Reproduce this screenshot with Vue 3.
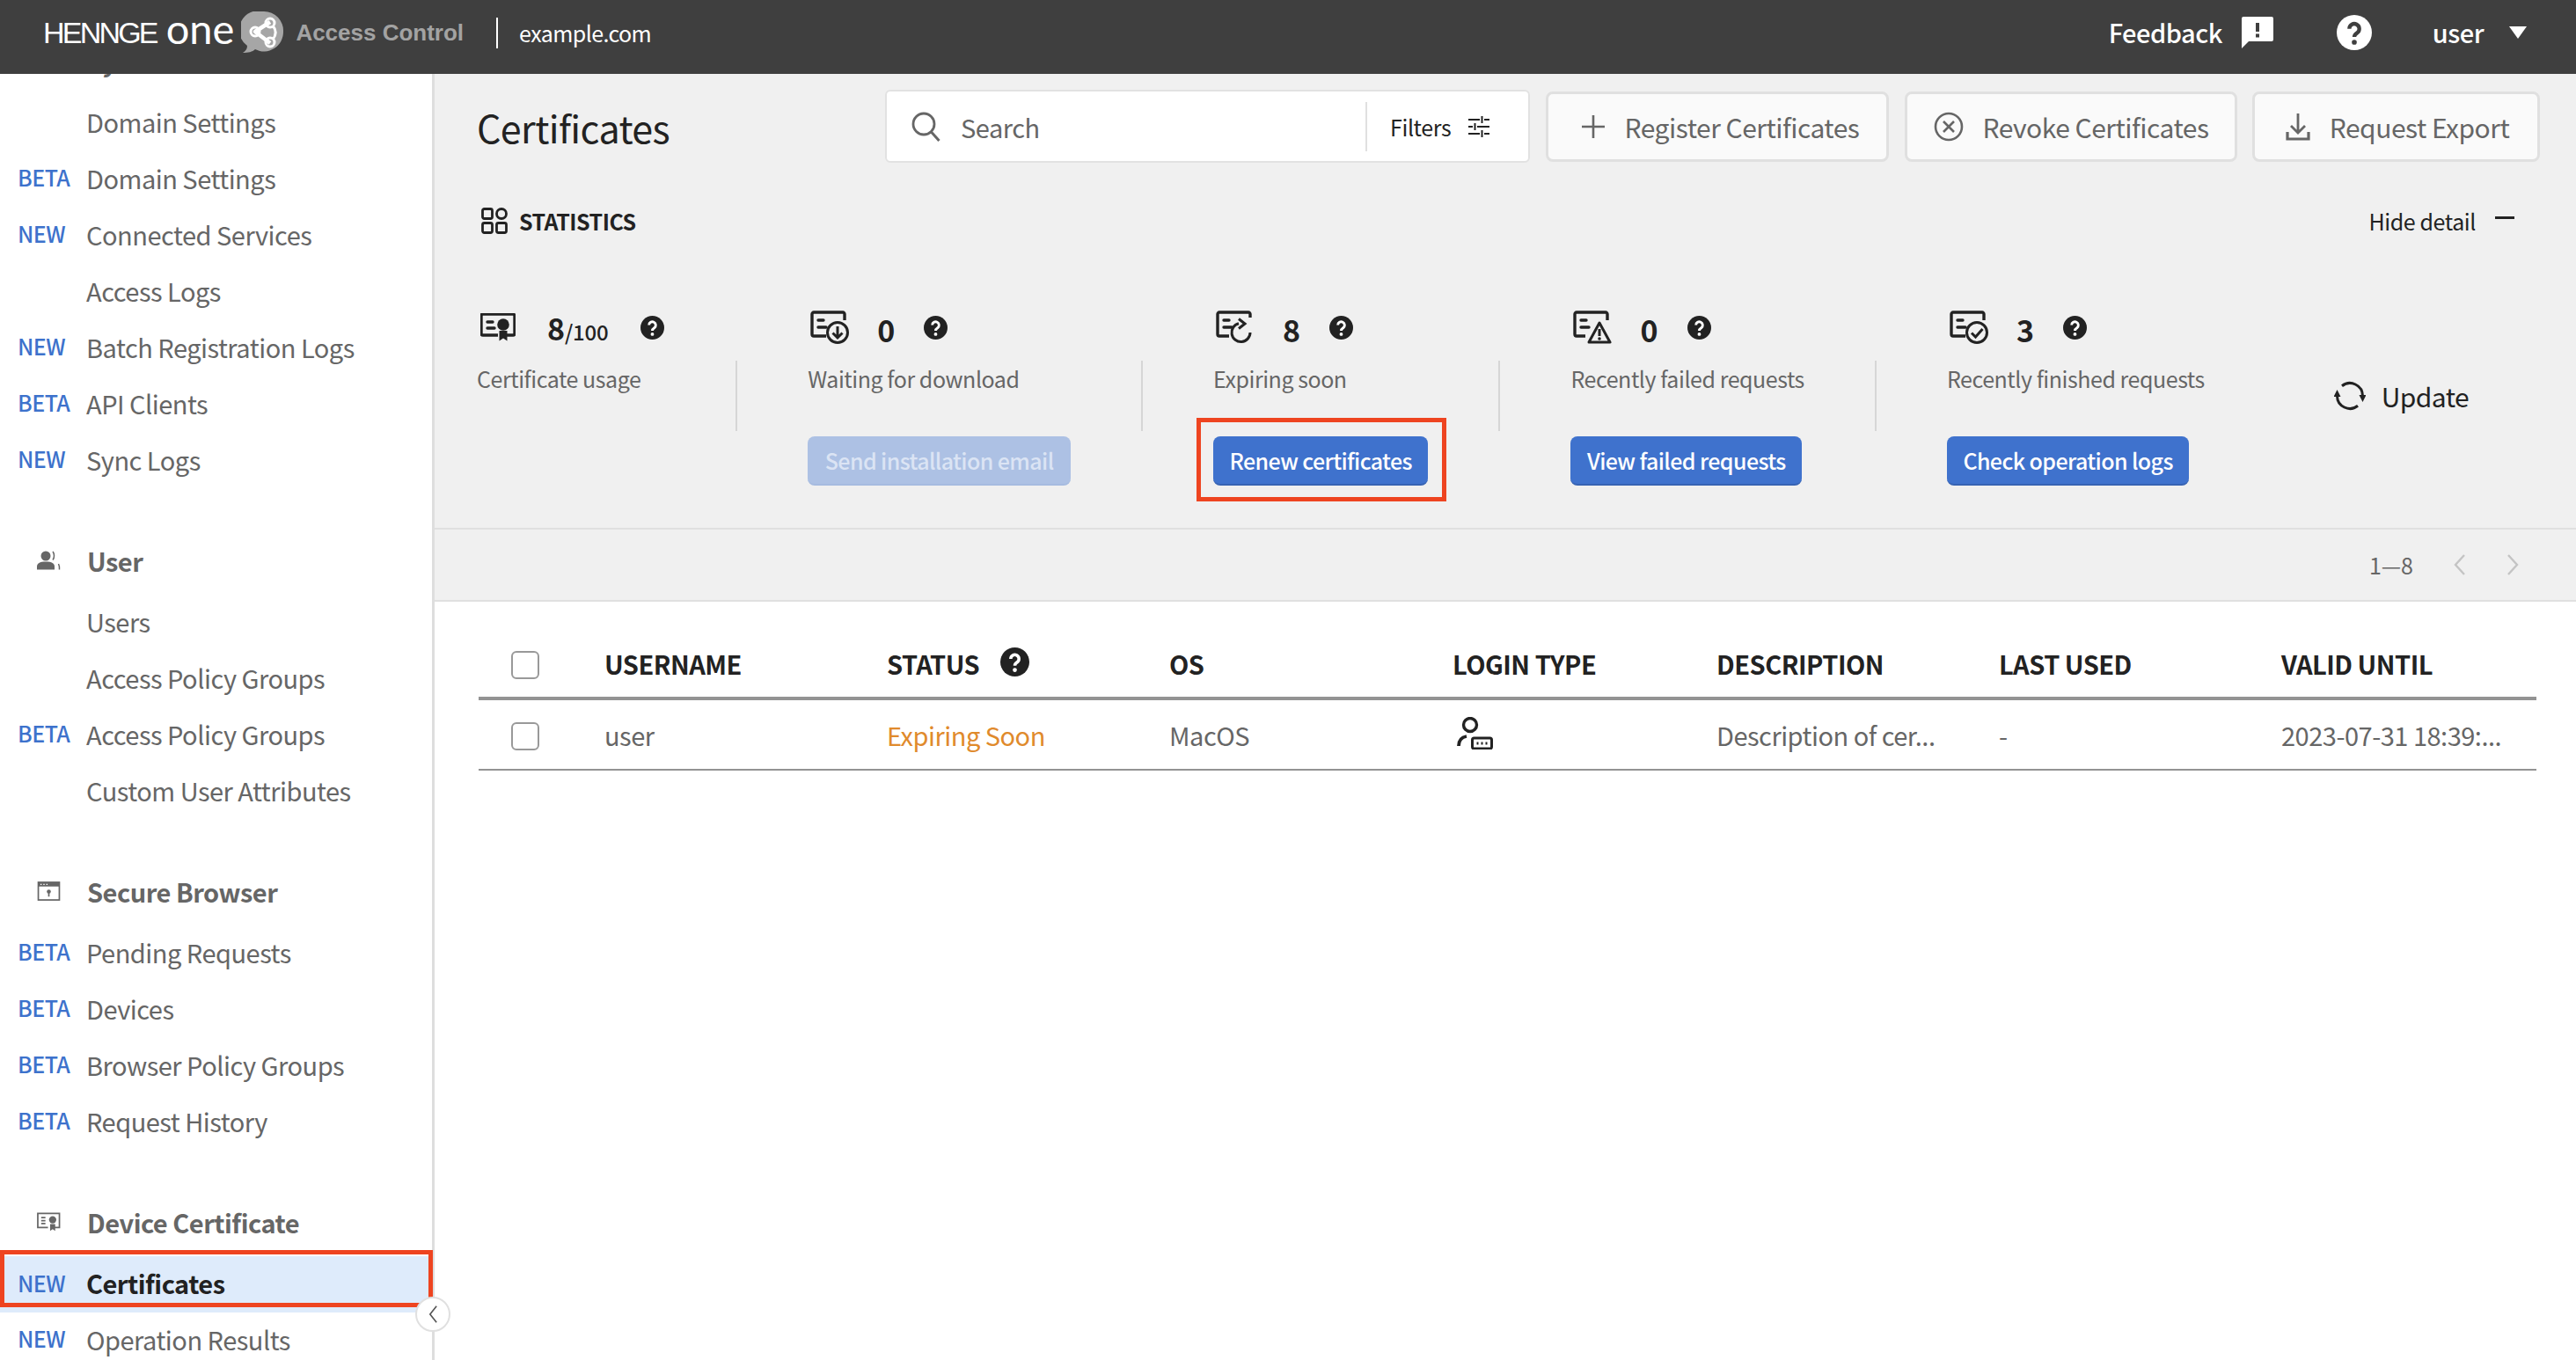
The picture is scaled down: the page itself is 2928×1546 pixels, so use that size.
<template>
  <div class="page">
    <svg class="sprite" aria-hidden="true">
      <symbol id="i-help" viewBox="0 0 24 24">
        <circle cx="12" cy="12" r="12" fill="currentColor" />
        <path d="M8.600 9.400a3.400 3.400 0 1 1 5.400 2.800c-1.200.8-2 1.300-2 2.800" fill="none" style="stroke: var(--q, #fff)" stroke-width="2.600" />
        <circle cx="12" cy="18.600" r="1.700" style="fill: var(--q, #fff)" />
      </symbol>
      <symbol id="i-cert" viewBox="0 0 40 32">
        <path d="M30 25h7a2 2 0 0 0 2-2V3a2 2 0 0 0-2-2H3a2 2 0 0 0-2 2v20a2 2 0 0 0 2 2h17" fill="none" stroke="currentColor" stroke-width="3.400" />
        <path d="M8 10h6M8 17h8" stroke="currentColor" stroke-width="3.400" stroke-linecap="round" />
        <circle cx="26" cy="13" r="6.800" fill="currentColor" />
        <path d="M21.500 20h9v11.500l-4.500-3-4.500 3z" fill="currentColor" />
      </symbol>
      <symbol id="i-wait" viewBox="0 0 44 38">
        <path d="M39 11V4a2 2 0 0 0-2-2H4a2 2 0 0 0-2 2v23a2 2 0 0 0 2 2h14" fill="none" stroke="currentColor" stroke-width="3.400" />
        <path d="M9 11h6M9 19h9" stroke="currentColor" stroke-width="3.400" stroke-linecap="round" />
        <circle cx="31" cy="25" r="11.500" fill="none" stroke="currentColor" stroke-width="3" />
        <path d="M31 18v13M25.500 25.500l5.500 5.500 5.500-5.500" fill="none" stroke="currentColor" stroke-width="3" />
      </symbol>
      <symbol id="i-renew" viewBox="0 0 44 38">
        <path d="M39 8V4a2 2 0 0 0-2-2H4a2 2 0 0 0-2 2v23a2 2 0 0 0 2 2h11" fill="none" stroke="currentColor" stroke-width="3.400" />
        <path d="M9 11h6M9 19h9" stroke="currentColor" stroke-width="3.400" stroke-linecap="round" />
        <path d="M39 25a10.500 10.500 0 1 1-13-10.200" fill="none" stroke="currentColor" stroke-width="3" />
        <path d="M26 9.500l7 5.500-7 5.500" fill="none" stroke="currentColor" stroke-width="3" />
      </symbol>
      <symbol id="i-warn" viewBox="0 0 44 38">
        <path d="M39 11V4a2 2 0 0 0-2-2H4a2 2 0 0 0-2 2v23a2 2 0 0 0 2 2h10" fill="none" stroke="currentColor" stroke-width="3.400" />
        <path d="M9 11h6M9 19h9" stroke="currentColor" stroke-width="3.400" stroke-linecap="round" />
        <path d="M30 14l12 22H18z" fill="none" stroke="currentColor" stroke-width="3" stroke-linejoin="round" />
        <path d="M30 21v8" stroke="currentColor" stroke-width="3" />
        <circle cx="30" cy="32" r="1.800" fill="currentColor" />
      </symbol>
      <symbol id="i-done" viewBox="0 0 44 38">
        <path d="M39 11V4a2 2 0 0 0-2-2H4a2 2 0 0 0-2 2v23a2 2 0 0 0 2 2h14" fill="none" stroke="currentColor" stroke-width="3.400" />
        <path d="M9 11h6M9 19h9" stroke="currentColor" stroke-width="3.400" stroke-linecap="round" />
        <circle cx="31" cy="25" r="11.500" fill="none" stroke="currentColor" stroke-width="3" />
        <path d="M25 25.500l4.500 4.500 8-9" fill="none" stroke="currentColor" stroke-width="3" />
      </symbol>
      <symbol id="i-user" viewBox="0 0 27 22">
        <circle cx="10" cy="6" r="5.500" fill="currentColor" />
        <path d="M0 21.500V18c0-3.500 3-5.500 10-5.500s10 2 10 5.500v3.500z" fill="currentColor" />
        <path d="M18 1c2 2.500 2 7 0 9.500M24.500 15c1 2 1.200 4 1 6.500" fill="none" stroke="currentColor" stroke-width="1.500" />
      </symbol>
      <symbol id="i-browser" viewBox="0 0 27 23">
        <rect x="1" y="1" width="25" height="21" fill="none" stroke="currentColor" stroke-width="1.800" />
        <path d="M1 1h25v5H1z" fill="currentColor" />
        <path d="M3.500 3.500h1.500M7 3.500h1.500M10.500 3.500h1.500" stroke="#fff" stroke-width="1.500" />
        <circle cx="13.500" cy="12" r="2.400" fill="currentColor" />
        <path d="M13.500 13v5" stroke="currentColor" stroke-width="1.800" />
      </symbol>
      <symbol id="i-device" viewBox="0 0 28 22">
        <path d="M20 17.500h6.500V1H1v16.500h12" fill="none" stroke="currentColor" stroke-width="1.800" />
        <path d="M5 6h5M5 9.500h5M5 13h5" stroke="currentColor" stroke-width="1.800" />
        <circle cx="18.500" cy="8.500" r="4.300" fill="currentColor" />
        <path d="M15.500 13.500h6v8l-3-2-3 2z" fill="currentColor" />
      </symbol>
      <symbol id="i-login" viewBox="0 0 41 37">
        <circle cx="15" cy="9" r="7.500" fill="none" stroke="currentColor" stroke-width="3.400" />
        <path d="M2 33c0-6 3-10 9-11" fill="none" stroke="currentColor" stroke-width="3.800" />
        <rect x="17.500" y="24" width="22" height="12" rx="2" fill="none" stroke="currentColor" stroke-width="3" />
        <path d="M22.500 30h2M27.500 30h2M32.500 30h2" stroke="currentColor" stroke-width="2.800" />
      </symbol>
    </svg>

    <header class="topbar">
      <div class="brand">
        <span class="brand-name">HENNGE</span>
        <span class="brand-one">one</span>
        <svg class="brand-mark" viewBox="0 0 48 48">
          <path d="M26 0a22 22 0 0 1 22 23 22 22 0 0 1-32 20c-3 3-8 4-14 4 3-2 5-4 5-8A22 22 0 0 1 26 0z" fill="#a6a6a6" />
          <path d="M33 12L16 23l17 13" fill="none" stroke="#fff" stroke-width="4.500" stroke-linejoin="round" />
          <circle cx="16" cy="23" r="5" fill="none" stroke="#fff" stroke-width="3" />
          <circle cx="33" cy="13" r="5" fill="none" stroke="#fff" stroke-width="3" />
          <circle cx="33" cy="35" r="5" fill="none" stroke="#fff" stroke-width="3" />
          <path d="M36 16c4 5 4 11 0 16" fill="none" stroke="#fff" stroke-width="3" />
        </svg>
        <span class="brand-product">Access Control</span>
        <span class="brand-domain">example.com</span>
      </div>
      <div class="topbar-right">
        <span class="top-link">Feedback</span>
        <svg class="feedback-icon" viewBox="0 0 36 36">
          <path d="M2 0h32a2 2 0 0 1 2 2v24a2 2 0 0 1-2 2H8l-8 8V2a2 2 0 0 1 2-2z" fill="#fff" />
          <path d="M18 7v10" stroke="#3f3f3f" stroke-width="4" />
          <rect x="16" y="19.500" width="4" height="4" fill="#3f3f3f" />
        </svg>
        <svg class="top-help"><use href="#i-help" /></svg>
        <span class="top-link top-user">user</span>
        <span class="caret"></span>
      </div>
    </header>

    <div class="body">
      <aside class="sidebar">
        <nav class="sidebar-inner">
          <section v-for="group in nav" :key="group.title" class="nav-group">
            <div class="nav-head">
              <svg v-if="group.icon" class="nav-icon" :class="group.icon"><use :href="`#i-${group.icon}`" /></svg>
              <span class="nav-icon" v-else></span>
              <span>{{ group.title }}</span>
            </div>
            <div
              v-for="item in group.items"
              :key="item.label + item.tag"
              class="nav-item"
              :class="{ active: item.active }"
            >
              <span class="nav-tag">{{ item.tag }}</span>
              <span>{{ item.label }}</span>
            </div>
          </section>
        </nav>
        <div class="active-mark"></div>
        <button class="collapse">
          <svg viewBox="0 0 12 24"><path d="M10 2L2 12l8 10" fill="none" stroke="#555" stroke-width="1.800" /></svg>
        </button>
      </aside>

      <main class="main">
        <div class="panel">
          <div class="toolbar">
            <h1 class="title">Certificates</h1>
            <div class="search">
              <svg class="search-icon" viewBox="0 0 34 34">
                <circle cx="14" cy="14" r="12" fill="none" stroke="currentColor" stroke-width="2.800" />
                <path d="M22.500 23l9 10" stroke="currentColor" stroke-width="3" />
              </svg>
              <span class="search-text">Search</span>
              <div class="filters">
                <span>Filters</span>
                <svg class="filter-icon" viewBox="0 0 24 24">
                  <path d="M0 4h13M18 4h6M0 12h5M10 12h14M0 20h13M18 20h6M15.500 0v8M7.500 8v8M15.500 16v8" fill="none" stroke="#222" stroke-width="2" />
                </svg>
              </div>
            </div>
            <button class="tool-btn register">
              <svg class="tool-icon" viewBox="0 0 28 28"><path d="M14 1v26M1 14h26" stroke="currentColor" stroke-width="2.600" /></svg>
              Register Certificates
            </button>
            <button class="tool-btn revoke">
              <svg class="tool-icon" viewBox="0 0 34 34">
                <circle cx="17" cy="17" r="15" fill="none" stroke="currentColor" stroke-width="2.600" />
                <path d="M11 11l12 12M23 11L11 23" stroke="currentColor" stroke-width="2.600" />
              </svg>
              Revoke Certificates
            </button>
            <button class="tool-btn export">
              <svg class="tool-icon" viewBox="0 0 28 32">
                <path d="M14 1v21M6 15l8 8 8-8" fill="none" stroke="currentColor" stroke-width="2.800" />
                <path d="M2 22v8h24v-8" fill="none" stroke="currentColor" stroke-width="3.200" />
              </svg>
              Request Export
            </button>
          </div>

          <div class="stats-head">
            <svg class="stats-icon" viewBox="0 0 30 30">
              <g fill="none" stroke="#222" stroke-width="2.800">
                <rect x="1.500" y="1.500" width="11" height="11" rx="2" />
                <circle cx="23" cy="7" r="5.500" />
                <rect x="1.500" y="17.500" width="11" height="11" rx="2" />
                <rect x="17.500" y="17.500" width="11" height="11" rx="2" />
              </g>
            </svg>
            <span class="stats-title">STATISTICS</span>
            <span class="hide-detail">Hide detail</span>
            <span class="minus"></span>
          </div>

          <div class="stats">
            <template v-for="(stat, i) in stats" :key="stat.label">
              <span v-if="i > 0" class="stat-sep"></span>
              <div class="stat">
                <div class="stat-top">
                  <svg class="stat-icon" :class="{ 'is-cert': stat.icon === 'cert' }"><use :href="`#i-${stat.icon}`" /></svg>
                  <span class="stat-value">{{ stat.value }}<small v-if="stat.total">/{{ stat.total }}</small></span>
                  <svg class="stat-help"><use href="#i-help" /></svg>
                </div>
                <div class="stat-label">{{ stat.label }}</div>
                <button v-if="stat.action" class="stat-btn" :class="{ disabled: stat.disabled }">{{ stat.action }}</button>
                <div v-if="stat.marked" class="btn-mark"></div>
              </div>
            </template>
            <div class="update">
              <svg class="update-icon" viewBox="0 0 36 36">
                <path d="M9 6.700A14.500 14.500 0 0 1 32.500 18M27 29.300A14.500 14.500 0 0 1 3.500 18" fill="none" stroke="#222" stroke-width="3" />
                <path d="M28.500 17h8l-4 8zM-.5 19h8l-4-8z" fill="#222" />
              </svg>
              <span>Update</span>
            </div>
          </div>
        </div>

        <div class="pager">
          <span>1—8</span>
          <svg class="pager-arrow" viewBox="0 0 14 26"><path d="M12 2L2 13l10 11" fill="none" stroke="#c4c4c4" stroke-width="2.400" /></svg>
          <svg class="pager-arrow" viewBox="0 0 14 26"><path d="M2 2l10 11L2 24" fill="none" stroke="#c4c4c4" stroke-width="2.400" /></svg>
        </div>

        <div class="table">
          <div class="row row-head">
            <span class="check"></span>
            <span v-for="col in columns" :key="col" class="head-cell">
              {{ col }}
              <svg v-if="col === 'STATUS'" class="status-help"><use href="#i-help" /></svg>
            </span>
          </div>
          <div class="row row-body">
            <span class="check"></span>
            <span>user</span>
            <span class="expiring">Expiring Soon</span>
            <span>MacOS</span>
            <span><svg class="login-icon"><use href="#i-login" /></svg></span>
            <span>Description of cer...</span>
            <span>-</span>
            <span>2023-07-31 18:39:...</span>
          </div>
        </div>
      </main>
    </div>
  </div>
</template>

<script setup>
const nav = [
  {
    title: 'System',
    icon: '',
    items: [
      { tag: '', label: 'Domain Settings' },
      { tag: 'BETA', label: 'Domain Settings' },
      { tag: 'NEW', label: 'Connected Services' },
      { tag: '', label: 'Access Logs' },
      { tag: 'NEW', label: 'Batch Registration Logs' },
      { tag: 'BETA', label: 'API Clients' },
      { tag: 'NEW', label: 'Sync Logs' },
    ],
  },
  {
    title: 'User',
    icon: 'user',
    items: [
      { tag: '', label: 'Users' },
      { tag: '', label: 'Access Policy Groups' },
      { tag: 'BETA', label: 'Access Policy Groups' },
      { tag: '', label: 'Custom User Attributes' },
    ],
  },
  {
    title: 'Secure Browser',
    icon: 'browser',
    items: [
      { tag: 'BETA', label: 'Pending Requests' },
      { tag: 'BETA', label: 'Devices' },
      { tag: 'BETA', label: 'Browser Policy Groups' },
      { tag: 'BETA', label: 'Request History' },
    ],
  },
  {
    title: 'Device Certificate',
    icon: 'device',
    items: [
      { tag: 'NEW', label: 'Certificates', active: true },
      { tag: 'NEW', label: 'Operation Results' },
    ],
  },
];

const stats = [
  { icon: 'cert', value: '8', total: '100', label: 'Certificate usage' },
  { icon: 'wait', value: '0', label: 'Waiting for download', action: 'Send installation email', disabled: true },
  { icon: 'renew', value: '8', label: 'Expiring soon', action: 'Renew certificates', marked: true },
  { icon: 'warn', value: '0', label: 'Recently failed requests', action: 'View failed requests' },
  { icon: 'done', value: '3', label: 'Recently finished requests', action: 'Check operation logs' },
];

const columns = ['USERNAME', 'STATUS', 'OS', 'LOGIN TYPE', 'DESCRIPTION', 'LAST USED', 'VALID UNTIL'];
</script>

<style>
html,
body {
  margin: 0;
  background: #fff;
}
</style>

<style scoped>
.page {
  width: 2928px;
  height: 1546px;
  overflow: hidden;
  display: flex;
  flex-direction: column;
  font-family: "Noto Sans CJK JP", "Noto Sans", sans-serif;
  font-size: 29px;
  letter-spacing: -0.5px;
  color: #666;
}

.sprite {
  display: none;
}

button {
  font-family: inherit;
  cursor: pointer;
}

/* top bar */
.topbar {
  flex: 0 0 84px;
  height: 84px;
  box-sizing: border-box;
  padding-bottom: 10px;
  background: #3f3f3f;
  display: flex;
  align-items: center;
  justify-content: space-between;
  position: relative;
  z-index: 2;
  color: #fff;
}

.brand {
  display: flex;
  align-items: center;
  padding-left: 49px;
}

.brand-name {
  font-family: "Liberation Sans", sans-serif;
  font-size: 34px;
  letter-spacing: -2.8px;
}

.brand-one {
  font-family: "Lato", sans-serif;
  font-weight: 400;
  font-size: 47px;
  line-height: 1;
  letter-spacing: 0;
  margin: -10px 0 0 11px;
}

.brand-mark {
  width: 48px;
  height: 48px;
  margin-left: 8px;
}

.brand-product {
  font-family: "Liberation Sans", sans-serif;
  font-weight: 700;
  font-size: 26px;
  letter-spacing: 0;
  color: #a3a3a3;
  margin-left: 14px;
}

.brand-domain {
  font-size: 25px;
  letter-spacing: -0.6px;
  margin-left: 37px;
  padding-left: 24px;
  border-left: 2px solid #fff;
  line-height: 35px;
}

.topbar-right {
  display: flex;
  align-items: center;
  padding-right: 56px;
}

.top-link {
  font-weight: 500;
  margin-top: -2px;
}

.feedback-icon {
  width: 36px;
  height: 36px;
  margin-left: 22px;
}

.top-help {
  width: 40px;
  height: 40px;
  margin-left: 72px;
  color: #fff;
  --q: #3f3f3f;
}

.top-user {
  margin-left: 69px;
}

.caret {
  margin-left: 29px;
  width: 0;
  height: 0;
  border-left: 10px solid transparent;
  border-right: 10px solid transparent;
  border-top: 14px solid #fff;
}

.body {
  flex: 1;
  display: flex;
  min-height: 0;
}

/* sidebar */
.sidebar {
  flex: 0 0 494px;
  box-sizing: border-box;
  border-right: 3px solid #dedede;
  position: relative;
  background: #fff;
}

.sidebar-inner {
  margin-top: -50px;
}

.nav-group {
  margin-bottom: 46px;
}

.nav-head {
  height: 74px;
  box-sizing: border-box;
  padding-bottom: 4px;
  display: flex;
  align-items: center;
  padding-left: 42px;
  font-weight: 700;
}

.nav-icon {
  width: 27px;
  height: 22px;
  margin-right: 30px;
  color: #666;
  flex: none;
}

.nav-item {
  height: 64px;
  box-sizing: border-box;
  padding-bottom: 5px;
  display: flex;
  align-items: center;
  padding-left: 20px;
}

.nav-tag {
  width: 78px;
  flex: none;
  font-size: 25px;
  letter-spacing: -0.5px;
  font-weight: 500;
  color: #3d72cc;
  margin-top: -1px;
}

.nav-item.active {
  background: #deebfb;
  color: #222;
  font-weight: 700;
}

.nav-item.active .nav-tag {
  font-weight: 500;
  margin-top: 0;
}

.active-mark {
  position: absolute;
  left: 0;
  top: 1337px;
  width: 492px;
  height: 65px;
  box-sizing: border-box;
  border: 5px solid #ee4420;
}

.collapse {
  position: absolute;
  left: 472px;
  top: 1390px;
  width: 40px;
  height: 40px;
  padding: 0;
  border-radius: 50%;
  border: 2px solid #e0e0e0;
  background: #fff;
  display: flex;
  align-items: center;
  justify-content: center;
}

.collapse svg {
  width: 11px;
  height: 24px;
}

/* main */
.main {
  flex: 1;
  min-width: 0;
  display: flex;
  flex-direction: column;
}

.panel {
  background: #f0f0f0;
  height: 518px;
  box-sizing: border-box;
  border-bottom: 2px solid #e0e0e0;
  padding: 18px 0 0 48px;
}

.toolbar {
  display: flex;
  align-items: center;
  padding-right: 42px;
}

.title {
  margin: 0;
  font-size: 43px;
  letter-spacing: -0.6px;
  font-weight: 400;
  color: #222;
  width: 464px;
  flex: none;
}

.search {
  width: 733px;
  height: 83px;
  box-sizing: border-box;
  border: 2px solid #e2e2e2;
  border-radius: 6px;
  background: #fff;
  display: flex;
  align-items: center;
  padding-left: 28px;
  margin-right: 18px;
  flex: none;
}

.search-icon {
  width: 34px;
  height: 34px;
  color: #666;
}

.search-text {
  margin-left: 22px;
  flex: 1;
}

.filters {
  width: 185px;
  height: 56px;
  box-sizing: border-box;
  border-left: 2px solid #e0e0e0;
  display: flex;
  align-items: center;
  padding-left: 26px;
  color: #222;
  font-size: 25px;
  letter-spacing: -0.4px;
}

.filter-icon {
  width: 24px;
  height: 24px;
  margin-left: 20px;
}

.tool-btn {
  height: 80px;
  box-sizing: border-box;
  border: 3px solid #e0e0e0;
  border-radius: 8px;
  background: #fafafa;
  color: #666;
  font-size: 30px;
  letter-spacing: -0.5px;
  display: flex;
  align-items: center;
  justify-content: center;
  padding: 0;
  flex: none;
}

.register {
  width: 390px;
  padding-left: 6px;
}

.revoke {
  width: 378px;
  margin-left: 18px;
}

.export {
  width: 327px;
  margin-left: 17px;
  padding-left: 3px;
}

.tool-icon {
  height: 28px;
  width: 28px;
  margin-right: 22px;
}

.revoke .tool-icon {
  width: 34px;
  height: 34px;
}

.export .tool-icon {
  height: 32px;
}

.stats-head {
  display: flex;
  align-items: center;
  height: 30px;
  margin-top: 51px;
  padding-right: 70px;
}

.stats-icon {
  width: 30px;
  height: 30px;
  margin-left: 5px;
}

.stats-title {
  font-size: 25px;
  font-weight: 700;
  color: #222;
  margin-left: 13px;
  flex: 1;
}

.hide-detail {
  font-size: 25px;
  letter-spacing: -0.4px;
  color: #222;
}

.minus {
  width: 22px;
  height: 3px;
  background: #222;
  margin: -8px 0 0 22px;
}

.stats {
  display: flex;
  margin-top: 86px;
  padding-right: 122px;
}

.stat {
  position: relative;
  flex: none;
}

.stat-top {
  display: flex;
  align-items: center;
  height: 40px;
  padding-left: 3px;
  color: #222;
}

.stat-icon {
  width: 44px;
  height: 38px;
  flex: none;
}

.stat-icon.is-cert {
  width: 40px;
  height: 32px;
  margin: 0 4px 0 1px;
}

.stat-value {
  font-size: 34px;
  font-weight: 700;
  letter-spacing: 0;
  margin-left: 32px;
  line-height: 40px;
  margin-top: 6px;
  min-width: 17px;
}

.stat-value small {
  font-size: 24px;
  font-weight: 500;
  letter-spacing: -0.3px;
  margin-right: 4px;
}

.stat-help {
  width: 27px;
  height: 27px;
  margin-left: 33px;
  margin-right: 1px;
  flex: none;
}

.stat-label {
  font-size: 25px;
  letter-spacing: -0.45px;
  line-height: 36px;
  margin-top: 20px;
}

.stat-btn {
  display: block;
  margin-top: 48px;
  height: 56px;
  box-sizing: border-box;
  padding: 0 18.500px;
  border: 0;
  border-bottom: 2px solid #3763b3;
  border-radius: 8px;
  background: #3f72cd;
  color: #fff;
  font-size: 25px;
  letter-spacing: -0.6px;
  font-weight: 500;
  white-space: nowrap;
}

.stat-btn.disabled {
  padding: 0 19.500px;
  background: #adc1e4;
  border-bottom-color: #a6bbe0;
  color: #dbe4f4;
}

.btn-mark {
  position: absolute;
  left: -19px;
  top: 123px;
  width: 284px;
  height: 95px;
  box-sizing: border-box;
  border: 5px solid #ee4420;
}

.stat-sep {
  flex: none;
  width: 2px;
  height: 80px;
  margin: 58px 80px 0 80px;
  background: #d6d6d6;
}

.update {
  margin-left: auto;
  margin-top: -4px;
  align-self: center;
  display: flex;
  align-items: center;
  gap: 18px;
  color: #222;
  font-size: 30px;
  letter-spacing: -0.6px;
}

.update-icon {
  width: 36px;
  height: 36px;
}

.pager {
  height: 82px;
  box-sizing: border-box;
  background: #f0f0f0;
  border-bottom: 2px solid #e0e0e0;
  display: flex;
  align-items: center;
  padding-right: 65px;
  justify-content: flex-end;
  font-size: 25px;
  letter-spacing: 0;
}

.pager-arrow {
  width: 14px;
  height: 26px;
  margin-left: 46px;
}

/* table */
.table {
  margin: 32px 45px 0 50px;
}

.row {
  display: grid;
  grid-template-columns: 143px 321px 321px 322px 300px 321px 321px 1fr;
  align-items: center;
}

.row-head {
  height: 80px;
  box-sizing: border-box;
  border-bottom: 4px solid #939393;
  color: #222;
  font-weight: 700;
}

.row-head .check {
  margin-top: 4px;
}

.row-body {
  height: 80px;
  box-sizing: border-box;
  padding-bottom: 1px;
  border-bottom: 2px solid #939393;
}

.row-body .check {
  margin-top: 4px;
}

.head-cell {
  display: flex;
  align-items: center;
}

.check {
  width: 32px;
  height: 32px;
  box-sizing: border-box;
  margin-left: 37px;
  border: 2px solid #999;
  border-radius: 6px;
  background: #fff;
}

.status-help {
  width: 33px;
  height: 33px;
  margin: -4px 0 0 24px;
}

.expiring {
  color: #e08a2c;
}

.login-icon {
  display: block;
  width: 41px;
  height: 37px;
  margin: -2px 0 0 5px;
  color: #222;
}
</style>
